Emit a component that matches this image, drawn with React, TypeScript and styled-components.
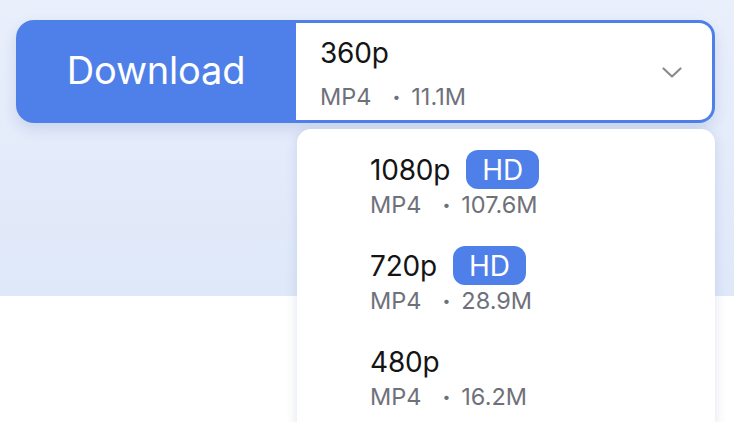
import styled, { createGlobalStyle } from "styled-components";

const BLUE = "#4f80e9";

const GlobalStyle = createGlobalStyle`
  html, body {
    margin: 0;
    padding: 0;
    background: #ffffff;
  }
  body {
    font-family: Inter, "Noto Sans", "Liberation Sans", sans-serif;
    -webkit-font-smoothing: antialiased;
  }
`;

const Page = styled.div`
  position: relative;
  width: 734px;
  height: 422px;
  overflow: hidden;
  background: #ffffff;
`;

const Hero = styled.div`
  height: 296px;
  box-sizing: border-box;
  padding: 20px 19px 0 16px;
  background: linear-gradient(180deg, #e9effb 0%, #dfe8f9 100%);
`;

const Group = styled.div`
  display: flex;
  height: 103px;
  border-radius: 18px;
  box-shadow: 0 6px 14px rgba(60, 90, 160, 0.16);
`;

const DownloadButton = styled.button`
  width: 280px;
  border: none;
  border-radius: 18px 0 0 18px;
  background: ${BLUE};
  color: #ffffff;
  font-family: inherit;
  font-size: 38px;
  font-weight: 400;
  letter-spacing: -0.2px;
  display: flex;
  align-items: center;
  justify-content: center;
  padding: 0 0 4px;
  cursor: pointer;
`;

const Select = styled.div`
  flex: 1;
  display: flex;
  align-items: center;
  justify-content: space-between;
  background: #ffffff;
  border: 3px solid ${BLUE};
  border-left: none;
  border-radius: 0 16px 16px 0;
  padding: 0 30px 0 24px;
`;

const SelectText = styled.div`
  display: flex;
  flex-direction: column;
  gap: 12px;
  margin-top: 6px;
`;

const Title = styled.span`
  font-size: 28px;
  line-height: 32px;
  color: #141414;
  letter-spacing: -0.2px;
`;

const Meta = styled.div<{ $lh?: number; $top?: number }>`
  display: flex;
  align-items: center;
  font-size: 23.5px;
  line-height: ${(p) => p.$lh ?? 32}px;
  margin-top: ${(p) => p.$top ?? 0}px;
  color: #6f717a;
`;

const Dot = styled.span`
  margin: 0 11px 0 21px;
  font-size: 14px;
`;

const Chevron = styled.svg`
  width: 20px;
  height: 11px;
  margin-top: 2px;
`;

const Menu = styled.div`
  position: absolute;
  top: 129px;
  left: 297px;
  width: 418px;
  height: 320px;
  box-sizing: border-box;
  background: #ffffff;
  border-radius: 14px;
  box-shadow: 0 2px 12px rgba(60, 90, 160, 0.16);
  padding: 21px 0 0 73px;
  display: flex;
  flex-direction: column;
  gap: 27px;
`;

const Item = styled.div`
  display: flex;
  flex-direction: column;
`;

const ItemHead = styled.div`
  display: flex;
  align-items: center;
  height: 39px;
`;

const Badge = styled.span`
  margin-left: 16px;
  height: 39px;
  padding: 0 16px;
  border-radius: 12px;
  background: ${BLUE};
  color: #ffffff;
  font-size: 28px;
  display: flex;
  align-items: center;
`;

const options = [
  { label: "1080p", hd: true, size: "107.6M" },
  { label: "720p", hd: true, size: "28.9M" },
  { label: "480p", hd: false, size: "16.2M" },
];

export default function App() {
  return (
    <Page>
      <GlobalStyle />
      <Hero>
        <Group>
          <DownloadButton>Download</DownloadButton>
          <Select>
            <SelectText>
              <Title>360p</Title>
              <Meta>
                MP4<Dot>•</Dot>11.1M
              </Meta>
            </SelectText>
            <Chevron viewBox="0 0 20 11" fill="none">
              <path
                d="M1.5 1.5 L10 9.5 L18.5 1.5"
                stroke="#8a8b90"
                strokeWidth="2.2"
                strokeLinecap="round"
                strokeLinejoin="round"
              />
            </Chevron>
          </Select>
        </Group>
      </Hero>
      <Menu>
        {options.map((o) => (
          <Item key={o.label}>
            <ItemHead>
              <Title>{o.label}</Title>
              {o.hd && <Badge>HD</Badge>}
            </ItemHead>
            <Meta $lh={28} $top={2}>
              MP4<Dot>•</Dot>
              {o.size}
            </Meta>
          </Item>
        ))}
      </Menu>
    </Page>
  );
}
